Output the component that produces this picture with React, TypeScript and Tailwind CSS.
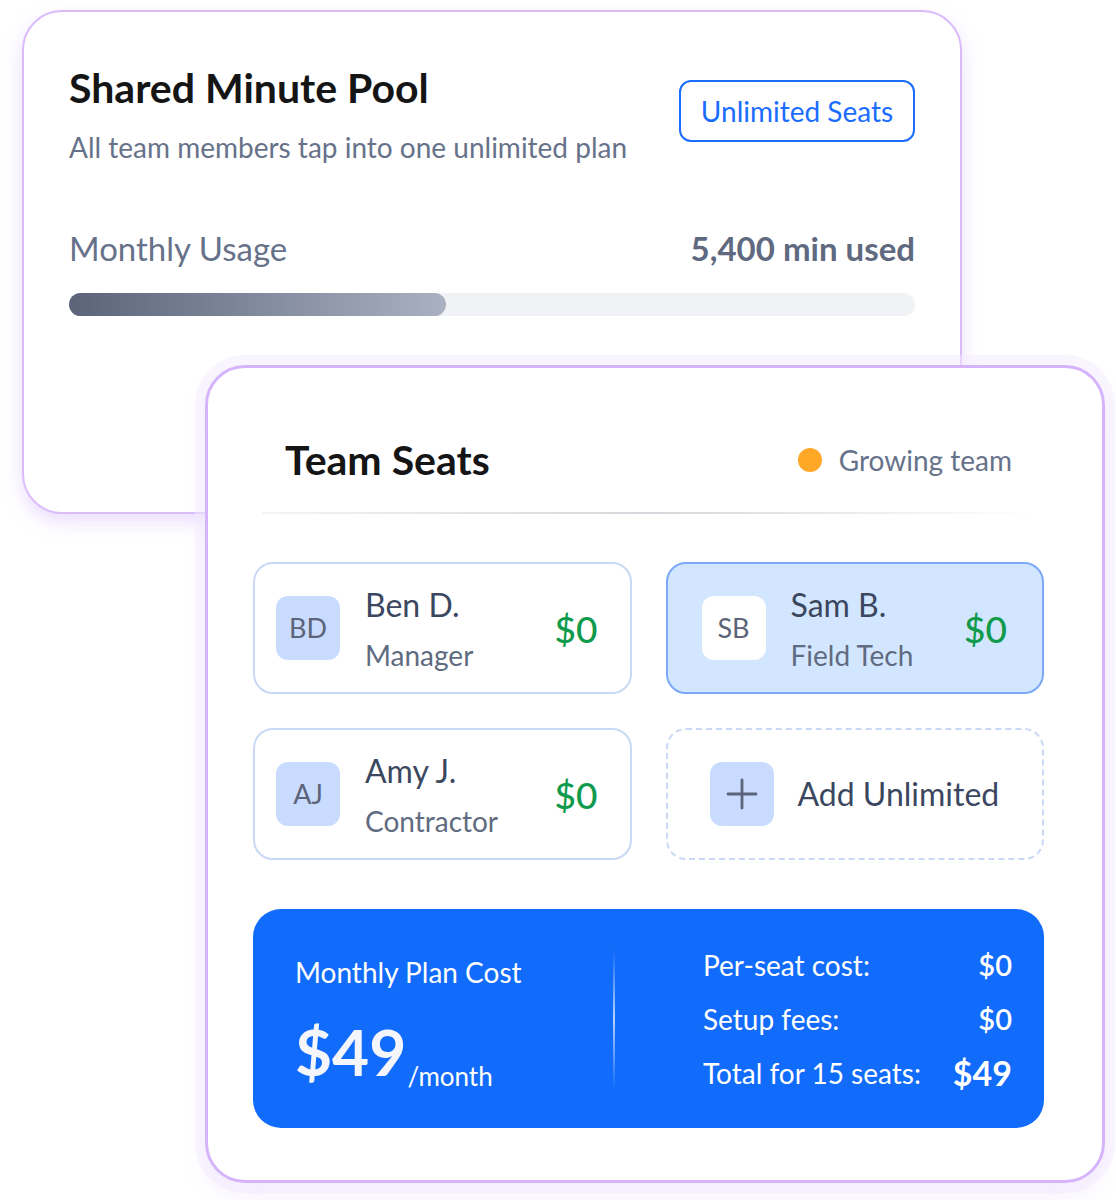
import React from "react";

type Seat = {
  initials: string;
  name: string;
  role: string;
  cost: string;
  active?: boolean;
};

const seats: Seat[] = [
  { initials: "BD", name: "Ben D.", role: "Manager", cost: "$0" },
  { initials: "SB", name: "Sam B.", role: "Field Tech", cost: "$0", active: true },
  { initials: "AJ", name: "Amy J.", role: "Contractor", cost: "$0" },
];

function SeatCard({ seat }: { seat: Seat }) {
  const shell = seat.active
    ? "border-[#7aa9f8] bg-[#d3e6ff] pl-[34px] pr-[35px]"
    : "border-[#c9d8f4] bg-white pl-[21px] pr-[32px]";
  const avatar = seat.active ? "bg-white" : "bg-[#c9dcff]";
  return (
    <div className={`flex h-[132px] items-center rounded-[20px] border-2 ${shell}`}>
      <div
        className={`flex h-16 w-16 shrink-0 items-center justify-center rounded-[12px] text-[27px] text-[#5b6478] ${avatar}`}
      >
        {seat.initials}
      </div>
      <div className="ml-[25px] flex flex-1 flex-col">
        <span className="text-[32px] leading-[40px] text-[#3b475f]">{seat.name}</span>
        <span className="mt-[13px] text-[28px] leading-[34px] text-[#5f6b80]">{seat.role}</span>
      </div>
      <span className="text-[37px] font-medium leading-none text-[#0f9a4c]">{seat.cost}</span>
    </div>
  );
}

function AddSeatCard() {
  return (
    <div className="flex h-[132px] items-center rounded-[20px] border-2 border-dashed border-[#c9d8f4] pl-[42px]">
      <div className="flex h-16 w-16 items-center justify-center rounded-[12px] bg-[#c9dcff]">
        <svg width="32" height="32" viewBox="0 0 32 32" fill="none">
          <path d="M16 2v28M2 16h28" stroke="#5b6478" strokeWidth="2.8" strokeLinecap="round" />
        </svg>
      </div>
      <span className="ml-[24px] text-[32px] text-[#3b475f]">Add Unlimited</span>
    </div>
  );
}

function CostRow({ label, value, strong }: { label: string; value: string; strong?: boolean }) {
  return (
    <div className="flex items-center justify-between">
      <span className="text-[28px] leading-[34px] text-white">{label}</span>
      <span
        className={
          strong
            ? "text-[34px] font-bold leading-[34px] text-white"
            : "text-[29px] font-semibold leading-[34px] text-white"
        }
      >
        {value}
      </span>
    </div>
  );
}

export default function App() {
  return (
    <div
      className="min-h-[1200px] w-[1116px] bg-white pl-[22px] pt-[10px]"
      style={{ fontFamily: "Lato, 'Noto Sans', sans-serif" }}
    >
      {/* Shared pool card */}
      <div className="h-[504px] w-[940px] rounded-[40px] border-2 border-[#dabcfb] bg-white px-[45px] pt-[54px] shadow-[0_8px_18px_rgba(196,160,250,0.35)]">
        <div className="flex items-start justify-between">
          <div>
            <h1 className="text-[41px] font-bold leading-[44px] text-[#151515]">Shared Minute Pool</h1>
            <p className="mt-[21px] text-[28px] leading-[32px] text-[#66728a]">
              All team members tap into one unlimited plan
            </p>
          </div>
          <div className="mt-[14px] flex h-[62px] w-[236px] items-center justify-center rounded-[12px] border-2 border-[#1a6dff] text-[28px] text-[#1a6dff]">
            Unlimited Seats
          </div>
        </div>
        <div className="mt-[65px] flex items-center justify-between">
          <span className="text-[33px] leading-[40px] text-[#66728a]">Monthly Usage</span>
          <span className="text-[33px] font-bold leading-[40px] text-[#5f6a80]">5,400 min used</span>
        </div>
        <div className="mt-[25px] h-[23px] w-full rounded-full bg-[#f1f2f6]">
          <div
            className="h-full rounded-full bg-gradient-to-r from-[#5b6479] to-[#aab1c2]"
            style={{ width: "44.6%" }}
          />
        </div>
      </div>

      {/* Team seats card */}
      <div className="relative ml-[183px] mt-[-149px] h-[818px] w-[900px] rounded-[40px] border-[3px] border-[#d6b4fb] bg-white pb-[48px] pl-[45px] pr-[58px] shadow-[0_0_0_10px_rgba(243,236,254,0.5),0_12px_20px_rgba(214,190,252,0.25)]">
        <div className="mx-[9px] pt-[70px]">
          <div className="flex items-center justify-between px-[23px]">
            <h2 className="text-[41px] font-bold leading-[44px] text-[#151515]">Team Seats</h2>
            <div className="flex items-center">
              <span className="h-6 w-6 rounded-full bg-[#ffa726]" />
              <span className="ml-[17px] text-[28px] leading-[34px] text-[#66728a]">Growing team</span>
            </div>
          </div>
          <div className="mt-[30px] h-[2px] w-full bg-gradient-to-r from-[#f4f4f6] via-[#d6d6dc] to-transparent" />
        </div>

        <div className="mt-[48px] grid grid-cols-2 gap-x-[34px] gap-y-[34px]">
          <SeatCard seat={seats[0]} />
          <SeatCard seat={seats[1]} />
          <SeatCard seat={seats[2]} />
          <AddSeatCard />
        </div>

        <div className="mt-[49px] flex h-[219px] items-center rounded-[28px] bg-[#116bfb] pl-[42px] pr-[32px]">
          <div className="w-[318px]">
            <div className="text-[28px] leading-[34px] text-white">Monthly Plan Cost</div>
            <div className="mt-[33px] flex items-end">
              <span className="text-[64px] font-bold leading-[60px] text-[#f4f6fb]">$49</span>
              <span className="mb-[-9px] ml-[1px] text-[26px] leading-[30px] text-white">/month</span>
            </div>
          </div>
          <div className="h-[140px] w-[2px] bg-gradient-to-b from-transparent via-white/70 to-transparent" />
          <div className="flex flex-1 flex-col gap-[20px] pl-[88px]">
            <CostRow label="Per-seat cost:" value="$0" />
            <CostRow label="Setup fees:" value="$0" />
            <CostRow label="Total for 15 seats:" value="$49" strong />
          </div>
        </div>
      </div>
    </div>
  );
}
